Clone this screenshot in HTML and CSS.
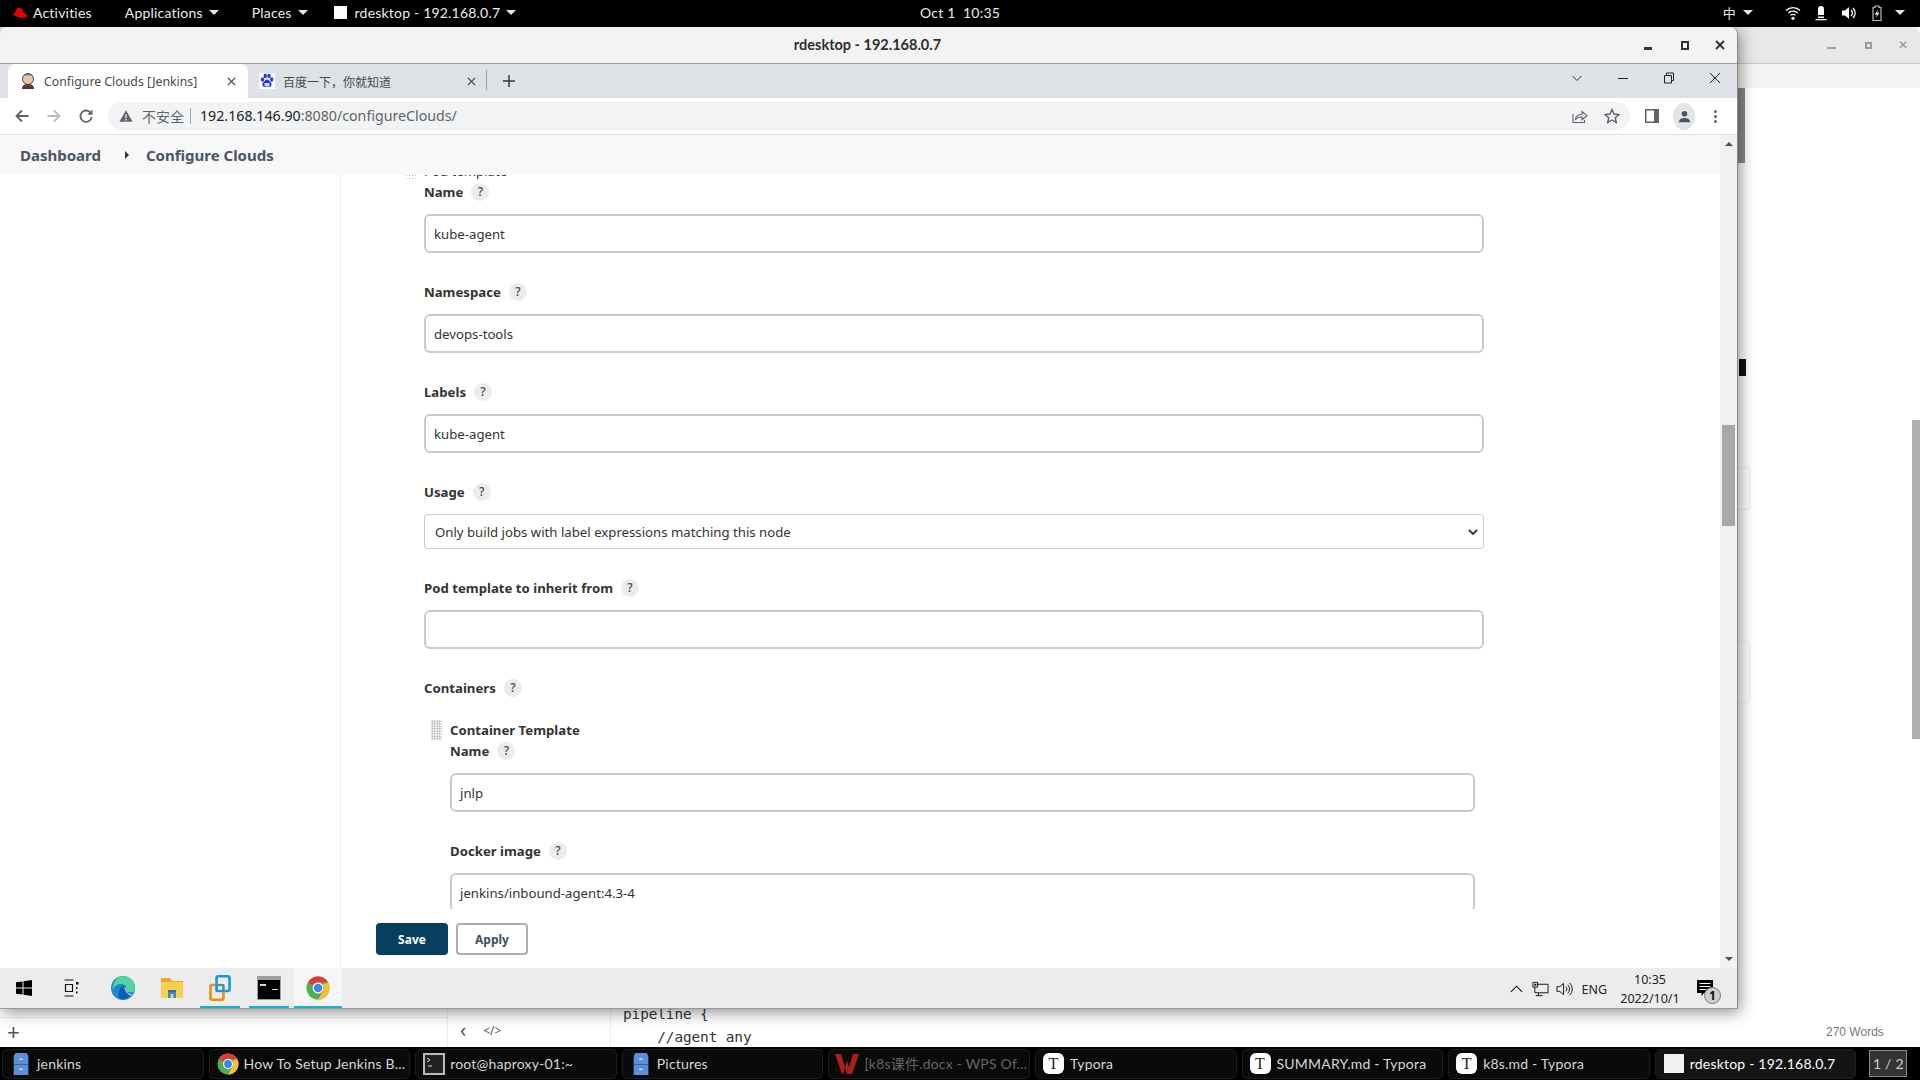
FILE: index.html
```html
<!DOCTYPE html>
<html lang="en">
<head>
<meta charset="utf-8">
<title>rdesktop</title>
<link rel="stylesheet" href="styles.css">
</head>
<body>
<svg class="defs" width="0" height="0">
  <symbol id="chrome" viewBox="0 0 48 48">
    <circle cx="24" cy="24" r="23" fill="#4caf50"/>
    <path d="M24 1a23 23 0 0 1 19.9 11.5H24a11.5 11.5 0 0 0-10.4 6.6L4.1 12.5A23 23 0 0 1 24 1z" fill="#e53935"/>
    <path d="M43.9 12.5A23 23 0 0 1 24 47l10-17.2a11.5 11.5 0 0 0-.8-12.3z" fill="#fbc02d"/>
    <circle cx="24" cy="24" r="11" fill="#fff"/>
    <circle cx="24" cy="24" r="8.5" fill="#3f82f0"/>
  </symbol>
  <symbol id="files" viewBox="0 0 16 24">
    <path d="M2 0h12l2 3v21H0V3z" fill="#5d8fd8"/>
    <rect y="12" width="16" height="1" fill="#2f5ea8"/>
    <rect x="6" y="6" width="4" height="1.4" fill="#dfe9f7"/>
    <rect x="6" y="17" width="4" height="1.4" fill="#dfe9f7"/>
  </symbol>
  <symbol id="caret" viewBox="0 0 10 5"><path d="M0 0h10L5 5z" fill="currentColor"/></symbol>
</svg>

<div class="screen">
  <header class="topbar">
    <div class="top-left">
      <span class="top-item">
        <svg class="rh" viewBox="0 0 16 12"><path d="M5 1.500C6.500.4 9 .5 10 1.500l1.600 4.200c1.800.8 3.600 1.300 3.600 2.800 0 2-3 3-6.700 2.300C5 10 .8 8.500 1 6.800c.1-.7 1.200-.7 1.900-.6C3 5 4 2.300 5 1.500z" fill="#e00000"/></svg>
        Activities
      </span>
      <span class="top-item top-apps">Applications <svg class="caret"><use href="#caret"/></svg></span>
      <span class="top-item top-places">Places <svg class="caret"><use href="#caret"/></svg></span>
      <span class="top-item top-app"><span class="app-square"></span>rdesktop - 192.168.0.7 <svg class="caret"><use href="#caret"/></svg></span>
    </div>
    <div class="top-clock">Oct 1&nbsp; 10:35</div>
    <div class="top-right">
      <span class="ime">中</span><svg class="caret ime-caret"><use href="#caret"/></svg>
      <svg class="tray-i" viewBox="0 0 16 16"><path d="M1 5.500a10 10 0 0 1 14 0M3.300 8a7 7 0 0 1 9.400 0M5.500 10.300a4 4 0 0 1 5 0" fill="none" stroke="#fff" stroke-width="1.300"/><circle cx="8" cy="13.300" r="1.600" fill="#fff"/></svg>
      <svg class="tray-i" viewBox="0 0 16 16"><path d="M8 1a3 3 0 0 1 3 3v6H5V4a3 3 0 0 1 3-3zM5 11.500h6v1.500H5zM2.500 14h11v1.200h-11z" fill="#fff"/></svg>
      <svg class="tray-i" viewBox="0 0 16 16"><path d="M1 5.500h3L8 2v12l-4-3.500H1z" fill="#fff"/><path d="M10 5a4 4 0 0 1 0 6M12 3a7 7 0 0 1 0 10" fill="none" stroke="#fff" stroke-width="1.300"/></svg>
      <svg class="tray-i" viewBox="0 0 16 16"><path d="M6 1h4v1.500h2v13H4v-13h2z" fill="none" stroke="#bbb" stroke-width="1.200"/><path d="M9 4.500 5.800 9.500H8l-1 3.500 3.300-5.200H8z" fill="#fff"/></svg>
      <svg class="caret end-caret"><use href="#caret"/></svg>
    </div>
  </header>

  <main class="desk">
    <section class="rear">
      <div class="rear-title">
        <span class="ctl c-min"></span><span class="ctl c-max"></span><span class="ctl c-x">✕</span>
      </div>
      <div class="rear-strip"></div>
      <div class="rear-body">
        <div class="rear-foot">
          <div class="foot-files"><span class="plus">+</span></div>
          <div class="foot-tools"><span>‹</span><span class="code-ico">&lt;/&gt;</span></div>
          <pre class="foot-code">pipeline {
    //agent any</pre>
          <div class="foot-words">270 Words</div>
        </div>
      </div>
      <span class="rear-bar"></span>
      <span class="rear-mark"></span>
      <span class="rear-scroll"></span>
      <span class="rear-box rb1"></span>
      <span class="rear-box rb2"></span>
    </section>

    <section class="win">
      <div class="win-title">
        <span class="win-name">rdesktop - 192.168.0.7</span>
        <div class="win-ctls">
          <span class="wc-min"></span><span class="wc-max"></span>
          <svg class="wc-x" viewBox="0 0 10 10"><path d="M1 1l8 8M9 1l-8 8" stroke="#333" stroke-width="2"/></svg>
        </div>
      </div>

      <div class="tabstrip">
        <div class="tab active">
          <svg class="fav" viewBox="0 0 16 16">
            <circle cx="8" cy="6" r="5.500" fill="#e8c4a8" stroke="#5a4a42" stroke-width="1"/>
            <path d="M3 3c1-3 9-3 10 0-2-1-8-1-10 0z" fill="#6b6b6b"/>
            <path d="M2 16c0-4 3-5 6-5s6 1 6 5z" fill="#3b3b44"/>
            <path d="M5.500 11.500 8 13l2.500-1.500V14L8 13l-2.500 1z" fill="#c0392b"/>
          </svg>
          <span class="tab-t">Configure Clouds [Jenkins]</span>
          <svg class="tab-x" viewBox="0 0 10 10"><path d="M1 1l8 8M9 1l-8 8" stroke="#444" stroke-width="1.400"/></svg>
        </div>
        <div class="tab">
          <svg class="fav" viewBox="0 0 16 16">
            <rect width="16" height="16" fill="#fff"/>
            <ellipse cx="3.500" cy="6.500" rx="1.700" ry="2.200" fill="#2932e1"/>
            <ellipse cx="6.300" cy="3" rx="1.700" ry="2.300" fill="#2932e1"/>
            <ellipse cx="10" cy="3" rx="1.700" ry="2.300" fill="#2932e1"/>
            <ellipse cx="12.700" cy="6.500" rx="1.700" ry="2.200" fill="#2932e1"/>
            <path d="M8 6.500c2 0 2.500 2 3.800 3 1.500 1.200.8 4.500-1.500 4.500-1 0-1.500-.4-2.300-.4s-1.300.4-2.300.4c-2.300 0-3-3.300-1.500-4.500 1.300-1 1.800-3 3.800-3z" fill="#2932e1"/>
            <rect x="5.500" y="10" width="5" height="3" fill="#fff" opacity=".8"/>
          </svg>
          <span class="tab-t cjk">百度一下，你就知道</span>
          <svg class="tab-x" viewBox="0 0 10 10"><path d="M1 1l8 8M9 1l-8 8" stroke="#444" stroke-width="1.400"/></svg>
        </div>
        <span class="tab-sep"></span>
        <svg class="tab-new" viewBox="0 0 12 12"><path d="M6 0v12M0 6h12" stroke="#333" stroke-width="1.400"/></svg>
        <div class="strip-ctls">
          <svg viewBox="0 0 12 12"><path d="M1.500 4 6 8.500 10.500 4" fill="none" stroke="#333"/></svg>
          <svg viewBox="0 0 12 12"><path d="M1 6.500h10" stroke="#222" stroke-width="1"/></svg>
          <svg viewBox="0 0 12 12"><path d="M1.500 3.500h7v7.500h-7zM3.500 3.500V1h7v7.500H8.500" fill="none" stroke="#222"/></svg>
          <svg viewBox="0 0 12 12"><path d="M1 1l10 10M11 1 1 11" stroke="#222"/></svg>
        </div>
      </div>

      <nav class="toolbar">
        <svg class="nav-i" viewBox="0 0 16 16"><path d="M14.500 8H2.500M8 2.500 2.500 8 8 13.500" fill="none" stroke="#5f6368" stroke-width="1.800"/></svg>
        <svg class="nav-i" viewBox="0 0 16 16"><path d="M1.500 8h12M8 2.500 13.500 8 8 13.500" fill="none" stroke="#b6b9bd" stroke-width="1.800"/></svg>
        <svg class="nav-i" viewBox="0 0 16 16"><path d="M13.300 6A5.700 5.700 0 1 0 13.700 9" fill="none" stroke="#5f6368" stroke-width="1.800"/><path d="M14.500 1.500v5.300H9.200z" fill="#5f6368"/></svg>
        <div class="omni">
          <svg class="warn" viewBox="0 0 16 16"><path d="M8 1.500 15.500 14.500H.5z" fill="#5f6368"/><path d="M7.300 6h1.400v4.500H7.300zM7.300 11.500h1.400V13H7.300z" fill="#fff"/></svg>
          <span class="insecure">不安全</span>
          <span class="omni-sep"></span>
          <span class="url">192.168.146.90<span class="url-dim">:8080/configureClouds/</span></span>
          <svg class="omni-i" viewBox="0 0 16 16"><path d="M1 6v8.500h11.500V12" fill="none" stroke="#5f6368" stroke-width="1.100"/><path d="M3.500 11.500c.3-3.500 3-5 6.500-5V3.500l5 4.200-5 4.100V9c-3 0-5 .8-6.500 2.500z" fill="none" stroke="#5f6368" stroke-width="1.100"/></svg>
          <svg class="omni-i star" viewBox="0 0 16 16"><path d="M8 1.500l2 4.500 4.900.5-3.700 3.200 1.100 4.800L8 12l-4.300 2.500 1.100-4.800L1.100 6.500 6 6z" fill="none" stroke="#5f6368" stroke-width="1.400"/></svg>
        </div>
        <svg class="side-i" viewBox="0 0 14 14"><rect width="14" height="14" fill="#5f6368"/><rect x="1.500" y="1.500" width="7.500" height="11" fill="#fff"/></svg>
        <div class="avatar"><svg viewBox="0 0 16 16"><circle cx="8" cy="5" r="3" fill="#4b5563"/><path d="M2 14c0-3.500 3-4.500 6-4.500s6 1 6 4.500z" fill="#4b5563"/></svg></div>
        <div class="dots"><i></i><i></i><i></i></div>
      </nav>

      <div class="browser">
        <div class="viewport">
          <div class="crumbs">
            <span>Dashboard</span>
            <svg class="crumb-arrow" viewBox="0 0 4 8"><path d="M0 0l4 4-4 4z" fill="#333"/></svg>
            <span>Configure Clouds</span>
          </div>
          <div class="page">
            <aside class="sidebar"></aside>
            <div class="main">
              <div class="scroller">
                <div class="form">
                  <span class="handle-top"></span>
                  <div class="clip-title">Pod template</div>
                  <div class="field">
                    <div class="label">Name <span class="help">?</span></div>
                    <div class="input">kube-agent</div>
                  </div>
                  <div class="field">
                    <div class="label">Namespace <span class="help">?</span></div>
                    <div class="input">devops-tools</div>
                  </div>
                  <div class="field">
                    <div class="label">Labels <span class="help">?</span></div>
                    <div class="input">kube-agent</div>
                  </div>
                  <div class="field">
                    <div class="label">Usage <span class="help">?</span></div>
                    <div class="select">Only build jobs with label expressions matching this node
                      <svg class="sel-arrow" viewBox="0 0 10 6"><path d="M1 1l4 4 4-4" fill="none" stroke="#333" stroke-width="1.800"/></svg>
                    </div>
                  </div>
                  <div class="field">
                    <div class="label">Pod template to inherit from <span class="help">?</span></div>
                    <div class="input"></div>
                  </div>
                  <div class="label">Containers <span class="help">?</span></div>
                  <div class="nested">
                    <span class="handle"></span>
                    <div class="nested-body">
                      <div class="nested-title">Container Template</div>
                      <div class="field">
                        <div class="label">Name <span class="help">?</span></div>
                        <div class="input">jnlp</div>
                      </div>
                      <div class="field">
                        <div class="label">Docker image <span class="help">?</span></div>
                        <div class="input">jenkins/inbound-agent:4.3-4</div>
                      </div>
                    </div>
                  </div>
                </div>
              </div>
              <div class="actions">
                <span class="btn btn-save">Save</span>
                <span class="btn btn-apply">Apply</span>
              </div>
            </div>
          </div>
        </div>
        <div class="scrollbar">
          <svg class="sb-arrow" viewBox="0 0 8 4"><path d="M0 4l4-4 4 4z" fill="#505050"/></svg>
          <span class="sb-thumb"></span>
          <svg class="sb-arrow sb-down" viewBox="0 0 8 4"><path d="M0 0l4 4 4-4z" fill="#505050"/></svg>
        </div>
      </div>

      <div class="taskbar">
        <div class="tb-left">
          <span class="tb-btn"><svg class="tb-i win-logo" viewBox="0 0 16 16"><path d="M0 2.300 6.500 1.400V7.500H0zM7.500 1.300 16 0v7.500H7.500zM0 8.500h6.500v6.100L0 13.700zM7.500 8.500H16V16l-8.500-1.200z" fill="#000"/></svg></span>
          <span class="tb-btn"><svg class="tb-i tv" viewBox="0 0 16 18"><path d="M1.500 1h9M1.500 17h9M2.500 5.500h7v7h-7z" fill="none" stroke="#111" stroke-width="1.200"/><rect x="13" y="3" width="2.500" height="2.500" fill="#111"/><rect x="13" y="8" width="1.500" height="2" fill="#111"/><rect x="13" y="12.500" width="1.500" height="2" fill="#111"/></svg></span>
          <span class="tb-btn"><svg class="tb-app nudge" viewBox="0 0 24 24"><circle cx="12" cy="12" r="12" fill="#1b87d6"/><path d="M24 12c0 3-2 4.500-4.500 4.500S15 15.500 15 13c1-3-1.500-5-5-5-3.500 0-6.500 2-8.800 5.500C2 6 6.500 0 12 0c7 0 12 5 12 12z" fill="#4fd6a0"/><path d="M9 13c0-2.500 3-3.500 6-2.500 0 3 .5 7 5 8.200C17 22.500 13 24 10 23c-4-1.500-3-6-1-10z" fill="#0b5fb0"/><path d="M14 11c.5 4 2 7.500 7 8" fill="none" stroke="#ececec" stroke-width="1"/></svg></span>
          <span class="tb-btn"><svg class="tb-app nudge" viewBox="0 0 24 24"><path d="M1 2h9l2 3h11v3H1z" fill="#e6a92c"/><path d="M1 6h22v16H1z" fill="#f7cf52"/><path d="M8 14h8v8h-2.500v-4h-3v4H8z" fill="#3b84c9"/><path d="M8 14h8v2H8z" fill="#2b6db0"/></svg></span>
          <span class="tb-btn run"><svg class="tb-app" viewBox="0 0 26 30"><rect x="9" y="1.500" width="15" height="17" rx="2" fill="none" stroke="#1398d6" stroke-width="3"/><rect x="2" y="11.500" width="15" height="17" rx="2" fill="none" stroke="#f08c10" stroke-width="3"/><rect x="9" y="11.500" width="8" height="7" fill="none" stroke="#1398d6" stroke-width="2"/></svg></span>
          <span class="tb-btn run"><svg class="tb-app cmd" viewBox="0 0 24 24"><rect width="24" height="24" rx="1" fill="#9aa0a6"/><rect x="1" y="4" width="22" height="19" fill="#000"/><path d="M3 8h6v2H3zM15 13h6v1h-6z" fill="#d8d8d8"/></svg></span>
          <span class="tb-btn run on"><svg class="tb-app"><use href="#chrome"/></svg></span>
        </div>
        <div class="tb-right">
          <svg class="tray2 chev" viewBox="0 0 14 8"><path d="M1 7l6-6 6 6" fill="none" stroke="#111" stroke-width="1.200"/></svg>
          <svg class="tray2" viewBox="0 0 18 16"><path d="M1 1h5v5H1zM5 3h12v9H3V6M7 12v3M4 15h7" fill="none" stroke="#111"/><rect x="2.500" y="2.500" width="2" height="2" fill="#111"/></svg>
          <svg class="tray2" viewBox="0 0 18 16"><path d="M1 5.500h3L8 2v12l-4-3.500H1z" fill="none" stroke="#111"/><path d="M10.500 5.500a3.500 3.500 0 0 1 0 5M12.500 3.500a6.500 6.500 0 0 1 0 9M14.500 1.500a9 9 0 0 1 0 13" fill="none" stroke="#111"/></svg>
          <span class="eng">ENG</span>
          <div class="clock"><div>10:35</div><div>2022/10/1</div></div>
          <div class="notif">
            <svg viewBox="0 0 16 18"><path d="M0 0h16v13H7l-2.500 3V13H0z" fill="#000"/><path d="M2.500 3.500h11M2.500 6.500h11M2.500 9.500h7" stroke="#fff"/></svg>
            <span class="notif-n">1</span>
          </div>
        </div>
      </div>
    </section>
  </main>

  <footer class="panel">
    <div class="task"><svg class="t-i t-files"><use href="#files"/></svg>jenkins</div>
    <div class="task"><svg class="t-i"><use href="#chrome"/></svg>How To Setup Jenkins B...</div>
    <div class="task"><svg class="t-i" viewBox="0 0 22 22"><rect x="1" y="1" width="20" height="20" fill="#222" stroke="#bbb" stroke-width="2"/><path d="M4 5l3 2-3 2M5 13h4" stroke="#ddd" fill="none"/></svg>root@haproxy-01:~</div>
    <div class="task"><svg class="t-i t-files"><use href="#files"/></svg>Pictures</div>
    <div class="task dim"><svg class="t-i wps" viewBox="0 0 24 22"><path d="M0 1h6l4 13 2-6 2 6 4-13h6l-7 20h-5l-2-6-2 6H7z" fill="#a8201a"/></svg><span>[k8s课件.docx - WPS Of...</span></div>
    <div class="task"><span class="typ">T</span>Typora</div>
    <div class="task"><span class="typ">T</span>SUMMARY.md - Typora</div>
    <div class="task"><span class="typ">T</span>k8s.md - Typora</div>
    <div class="task cur"><span class="rd-i"></span>rdesktop - 192.168.0.7</div>
    <div class="pager">1 / 2</div>
  </footer>
</div>
</body>
</html>
```

FILE: styles.css
```css
* { box-sizing: border-box; }
html, body { margin: 0; padding: 0; }
body { width: 1920px; height: 1080px; overflow: hidden; font-family: "Noto Sans", "Noto Sans CJK SC", sans-serif; background: #000; }
.defs { position: absolute; }
.screen { width: 1920px; height: 1080px; display: flex; flex-direction: column; }

/* gnome top bar */
.topbar { height: 27px; flex: none; background: #000; color: #ececec; display: grid; grid-template-columns: 1fr auto 1fr; align-items: center; padding-bottom: 2px; font: 14px/25px "Lato", "Noto Sans CJK SC", sans-serif; letter-spacing: .2px; }
.top-left { display: flex; align-items: center; }
.top-item { display: inline-flex; align-items: center; white-space: nowrap; }
.rh { width: 16px; height: 12px; margin: 0 5px 0 12px; }
.caret { width: 10px; height: 5px; color: #e6e6e6; margin-left: 6px; }
.top-apps { margin-left: 33px; }
.top-places { margin-left: 33px; }
.top-app { margin-left: 26px; }
.app-square { width: 13px; height: 13px; background: #fff; margin-right: 8px; }
.top-clock { text-align: center; }
.top-right { display: flex; align-items: center; justify-content: flex-end; padding-right: 15px; }
.ime { font-family: "Noto Sans CJK SC", sans-serif; font-size: 13px; }
.ime-caret { margin-left: 7px; margin-right: 32px; }
.tray-i { width: 16px; height: 16px; margin-right: 12px; }
.end-caret { margin-left: -2px; }

.desk { position: relative; flex: 1; overflow: hidden; background: #fff; }

/* rear window */
.rear { position: absolute; inset: 0; display: flex; flex-direction: column; background: #fff; }
.rear-title { height: 37px; flex: none; background: #e8e8e6; border-bottom: 1px solid #c8c8c6; border-top-right-radius: 8px; display: flex; justify-content: flex-end; align-items: center; gap: 26px; padding-right: 10px; color: #909090; }
.ctl { display: inline-block; }
.c-min { width: 9px; height: 2px; background: #a0a0a0; margin-top: 6px; margin-right: 3px; }
.c-max { width: 7px; height: 7px; border: 2px solid #9a9a9a; }
.c-x { font-size: 12px; line-height: 1; width: 12px; }
.rear-strip { height: 24px; flex: none; background: #f5f4f2; }
.rear-body { flex: 1; display: flex; flex-direction: column; justify-content: flex-end; }
.rear-foot { height: 47px; display: flex; color: #333; font-size: 12px; }
.foot-files { width: 448px; border-right: 1px solid #eee; background: #fff; display: flex; flex-direction: column; justify-content: flex-end; }
.plus { font: 22px/30px "Liberation Sans", sans-serif; padding-left: 7px; color: #555; height: 30px; border-top: 1px solid #eee; }
.foot-tools { width: 163px; border-right: 1px solid #eee; display: flex; align-items: flex-end; gap: 17px; padding: 0 0 6px 12px; color: #555; }
.foot-tools span:first-child { font-size: 20px; line-height: 22px; }
.code-ico { font-size: 12px; line-height: 20px; }
.foot-code { margin: 3px 0 0; padding: 0 0 0 12px; flex: 1; font: 14.4px/23px "DejaVu Sans Mono", monospace; color: #333; letter-spacing: -.1px; }
.foot-words { width: 94px; color: #777; font: 12px/16px "Liberation Sans", sans-serif; padding-top: 24px; }
.rear-bar { position: absolute; left: 1738px; top: 61px; width: 7px; height: 75px; background: #8c8c8c; }
.rear-mark { position: absolute; left: 1739px; top: 332px; width: 7px; height: 17px; background: #111; }
.rear-scroll { position: absolute; left: 1912px; top: 393px; width: 8px; height: 319px; background: #b0b0b0; }
.rear-box { position: absolute; left: 1730px; width: 20px; border: 1px solid #eee; border-radius: 3px; }
.rb1 { top: 440px; height: 43px; }
.rb2 { top: 614px; height: 62px; }

/* front window */
.win { position: absolute; left: 0; top: 0; width: 1738px; height: 982px; display: flex; flex-direction: column; background: #fff; border-radius: 8px 8px 0 0; box-shadow: 2px 3px 16px rgba(0,0,0,.45); border-right: 1px solid #8a8a8a; border-bottom: 1px solid #999; }
.win-title { height: 37px; flex: none; background: #f3f3f3; border-bottom: 1px solid #9c9c94; border-radius: 8px 8px 0 0; display: flex; align-items: center; justify-content: center; position: relative; }
.win-name { font: 700 14.5px/36px "Lato", sans-serif; color: #2e2e2e; margin-right: 2px; }
.win-ctls { position: absolute; right: 12px; top: 0; height: 36px; display: flex; align-items: center; gap: 26px; }
.wc-min { width: 8px; height: 3px; background: #333; margin-top: 6px; margin-right: 3px; }
.wc-max { width: 8px; height: 9px; border: 2px solid #333; }
.wc-x { width: 10px; height: 10px; }

/* chrome */
.tabstrip { height: 34px; flex: none; background: #dee1e6; display: flex; align-items: stretch; padding-left: 8px; position: relative; }
.tab { width: 240px; display: flex; align-items: center; padding-left: 12px; border-radius: 8px 8px 0 0; font-size: 12.3px; color: #45494e; }
.tab.active { background: #fff; color: #45494e; }
.tab + .tab { width: 238px; padding-left: 11px; }
.fav { width: 16px; height: 16px; flex: none; margin-right: 8px; }
.tab-t { flex: 1; white-space: nowrap; }
.cjk { font-family: "Noto Sans CJK SC", sans-serif; font-size: 12px; }
.tab-x { width: 9px; height: 9px; margin-right: 12px; }
.tab + .tab .tab-x { margin-right: 10px; }
.tab-sep { width: 1px; height: 20px; background: #9a9da1; margin-top: 6px; }
.tab-new { width: 12px; height: 12px; margin: 11px 0 0 16px; }
.strip-ctls { position: absolute; right: 16px; top: 8px; display: flex; gap: 34px; }
.strip-ctls svg { width: 12px; height: 12px; }
.toolbar { height: 37px; flex: none; background: #fff; border-bottom: 1px solid #dfe1e4; display: flex; align-items: center; padding: 0 12px 0 14px; }
.nav-i { width: 16px; height: 16px; margin-right: 16px; }
.omni { width: 1522px; margin-left: -2px; height: 28px; background: #f1f3f4; border-radius: 14px; display: flex; align-items: center; padding-left: 11px; }
.warn { width: 14px; height: 14px; }
.insecure { font: 14px "Noto Sans CJK SC", sans-serif; color: #5f6368; margin-left: 9px; margin-bottom: 1px; }
.omni-sep { width: 1px; height: 16px; background: #aaa; margin: 0 9px 0 6px; }
.url { font-size: 14.2px; color: #202124; flex: 1; margin-bottom: 2px; }
.url-dim { color: #5f6368; }
.omni-i { width: 16px; height: 16px; margin-right: 16px; }
.star { margin-right: 10px; }
.side-i { width: 14px; height: 14px; margin-left: 15px; }
.avatar { width: 22px; height: 27px; border-radius: 50%; background: #e3e5e8; margin-left: 14px; display: flex; align-items: center; justify-content: center; }
.avatar svg { width: 15px; height: 15px; }
.dots { margin-left: 19px; display: flex; flex-direction: column; gap: 2px; }
.dots i { width: 3px; height: 3px; border-radius: 50%; background: #5f6368; }

/* jenkins */
.browser { flex: 1; min-height: 0; display: flex; }
.viewport { flex: 1; min-width: 0; display: flex; flex-direction: column; }
.crumbs { height: 40px; flex: none; background: #f8f8f8; display: flex; align-items: center; padding-left: 20px; font: 700 15px "Noto Sans", sans-serif; color: #4a5563; }
.crumb-arrow { width: 4px; height: 8px; margin: 0 17px 0 24px; }
.page { flex: 1; min-height: 0; display: flex; }
.sidebar { width: 341px; flex: none; border-right: 1px solid #f0f0f0; }
.main { flex: 1; min-width: 0; display: flex; flex-direction: column; }
.scroller { height: 734px; flex: none; overflow: hidden; padding-left: 83px; }
.form { width: 1060px; position: relative; margin-top: -14px; font-size: 13.2px; color: #333; }
.clip-title { height: 20px; line-height: 20px; font-size: 13.2px; }
.handle-top { position: absolute; left: -19px; top: 13px; width: 12px; height: 7px; background: radial-gradient(circle, #b5b5b5 1px, transparent 1px) 0 0 / 3px 3px; }
.label { height: 22px; line-height: 22px; font-weight: 700; font-size: 13.2px; color: #333; white-space: nowrap; display: flex; align-items: center; gap: 4px; }
.help { width: 18px; height: 18px; border-radius: 50%; background: #ececec; color: #3c4650; font-size: 12px; font-weight: 500; line-height: 18px; text-align: center; margin-left: 4px; }
.field { margin-bottom: 28px; }
.input { height: 39px; margin-top: 11px; border: 2px solid #c3cdd0; border-radius: 6px; background: #fff; padding: 1px 0 0 8px; line-height: 35px; font-size: 13.2px; color: #333; }
.select { height: 35px; margin-top: 11px; border: 1px solid #c3ccd3; border-radius: 3px; padding: 1px 0 0 10px; line-height: 33px; font-size: 13.2px; color: #333; position: relative; }
.sel-arrow { position: absolute; right: 5px; top: 14px; width: 10px; height: 6px; }
.nested { display: flex; margin-top: 20px; padding-left: 7px; }
.handle { width: 11px; height: 20px; flex: none; margin: 1px 8px 0 0; background: radial-gradient(circle, #bdbdbd 1px, transparent 1px) 0 0 / 2.500px 2.500px; }
.nested-body { width: 1025px; }
.nested-title { height: 21px; line-height: 23px; font-weight: 700; font-size: 13.2px; color: #333; }
.actions { flex: 1; padding: 14px 0 0 35px; display: flex; gap: 8px; align-items: flex-start; }
.btn { height: 32px; border-radius: 4px; display: flex; align-items: center; justify-content: center; font-weight: 700; font-size: 12px; }
.btn-save { width: 72px; background: #053e5f; color: #fff; }
.btn-apply { width: 72px; background: #fff; border: 2px solid #a4aeb6; color: #3f4e5c; }
.scrollbar { width: 17px; flex: none; background: #f1f1f1; display: flex; flex-direction: column; align-items: center; padding-top: 7px; }
.sb-arrow { width: 8px; height: 4px; flex: none; }
.sb-thumb { width: 13px; height: 101px; margin-top: 279px; background: #a8a8a8; }
.sb-down { margin-top: auto; margin-bottom: 7px; }

/* windows taskbar */
.taskbar { height: 40px; flex: none; background: #ececec; display: flex; justify-content: space-between; }
.tb-left { display: flex; padding-left: 0; }
.tb-btn { width: 48.900px; height: 40px; display: flex; align-items: center; justify-content: center; padding-top: 2px; border-bottom: 2px solid transparent; }
.tb-btn.run { border-bottom-color: #12b3c4; width: 40px; margin: 0 4.500px; }
.tb-btn.on { background: #f6f6f6; width: 48px; margin: 0; }
.tb-i { width: 16px; height: 18px; }
.tv { margin-left: -4px; }
.nudge { margin-left: 2px; }
.win-logo { height: 16px; }
.tb-app { width: 24px; height: 24px; }
.tb-btn.run .tb-app { height: 26px; }
.tb-btn.run .cmd { height: 24px; }
.tb-right { display: flex; align-items: center; padding: 2px 16px 0 0; }
.tray2 { width: 17px; height: 16px; margin-right: 7px; }
.chev { width: 13px; height: 8px; margin-right: 9px; }
.eng { font-size: 12.500px; color: #222; margin-left: 1px; }
.clock { font-size: 12.500px; line-height: 19px; text-align: center; color: #222; margin-left: 13px; width: 60px; }
.notif { position: relative; width: 16px; height: 18px; margin: 0 8px 0 17px; }
.notif svg { width: 16px; height: 18px; display: block; }
.notif-n { position: absolute; left: 7px; top: 7px; width: 17px; height: 17px; border-radius: 50%; background: #cfcfcf; border: 1px solid #777; font: 700 12px/15px "Noto Sans", sans-serif; text-align: center; color: #111; }

/* bottom panel */
.panel { height: 33px; flex: none; background: #000; display: flex; align-items: center; padding-left: 2px; gap: 5px; font: 14px/1 "Lato", "Noto Sans CJK SC", sans-serif; color: #d8d8d8; letter-spacing: .2px; }
.task { width: 201.600px; flex: none; height: 30px; border: 1px solid #1e1e1e; border-radius: 5px; background: #0a0a0a; display: flex; align-items: center; white-space: nowrap; padding-left: 7px; overflow: hidden; }
.dim { color: #666; }
.t-i { width: 22px; height: 22px; flex: none; margin-right: 5px; }
.t-files { width: 16px; margin: 0 8px 0 3px; }
.wps { width: 24px; margin-left: -1px; margin-right: 5px; }
.cur { color: #fff; background: #141414; }
.typ { width: 21px; height: 21px; border-radius: 6px; background: #fff; color: #222; font: 16px/21px "Liberation Serif", serif; text-align: center; flex: none; margin: 0 6px 0 0; }
.rd-i { width: 20px; height: 19px; background: #f1f1f1; flex: none; margin: 0 6px 0 1px; }
.pager { width: 38px; height: 27px; flex: none; margin-left: 8px; border: 1px solid #888; background: #333; color: #ccc; text-align: center; line-height: 25px; }
```
